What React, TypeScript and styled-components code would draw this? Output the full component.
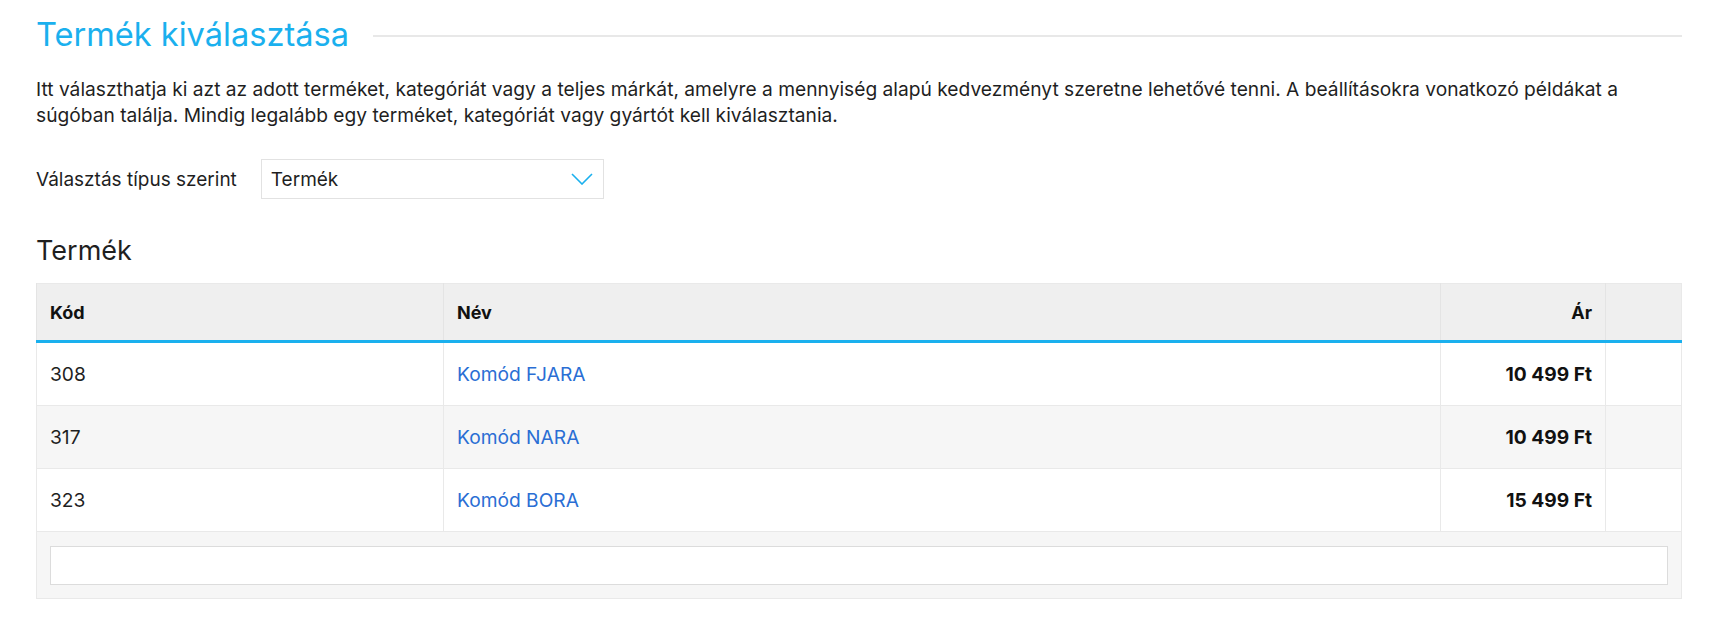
import styled, { createGlobalStyle } from 'styled-components';

const GlobalStyle = createGlobalStyle`
  body {
    margin: 0;
    background: #fff;
    font-family: 'Inter', 'Noto Sans', sans-serif;
    color: #1f1f1f;
  }
`;

const colors = {
  primary: '#1ab0ee',
  link: '#2a6ed4',
  border: '#e9e9e9',
  headBg: '#efefef',
  altBg: '#f6f6f6',
};

const Page = styled.div`
  padding: 14px 35px 32px 36px;
`;

const TitleRow = styled.div`
  display: flex;
  align-items: center;
  gap: 24px;
`;

const Title = styled.h1`
  margin: 0;
  font-size: 32.6px;
  line-height: 40px;
  font-weight: 400;
  color: ${colors.primary};
  white-space: nowrap;
`;

const Rule = styled.div`
  flex: 1;
  height: 2px;
  margin-top: 4px;
  background: #e8e8e8;
`;

const Intro = styled.p`
  margin: 22px 0 0;
  font-size: 19.2px;
  line-height: 26px;
`;

const FilterRow = styled.div`
  display: flex;
  align-items: center;
  gap: 24px;
  margin-top: 31px;
`;

const Label = styled.label`
  font-size: 19px;
`;

const Select = styled.div`
  display: flex;
  align-items: center;
  justify-content: space-between;
  box-sizing: border-box;
  width: 343px;
  height: 40px;
  padding: 0 10px 0 9px;
  border: 1px solid #e2e2e2;
  font-size: 19px;
  background: #fff;
`;

const SubTitle = styled.h2`
  margin: 34px 0 0;
  font-size: 27px;
  line-height: 35px;
  font-weight: 400;
`;

const Table = styled.table`
  margin-top: 15px;
  width: 100%;
  border-collapse: collapse;
  table-layout: fixed;
  border: 1px solid ${colors.border};
  font-size: 19.2px;
`;

const Th = styled.th<{ $right?: boolean }>`
  height: 56px;
  padding: 0 13px;
  background: ${colors.headBg};
  border-left: 1px solid #e4e4e4;
  border-bottom: 3px solid ${colors.primary};
  text-align: ${(p) => (p.$right ? 'right' : 'left')};
  font-size: 18px;
  font-weight: 700;
  color: #111;
`;

const Row = styled.tr<{ $alt: boolean }>`
  background: ${(p) => (p.$alt ? colors.altBg : '#fff')};
`;

const Td = styled.td<{ $right?: boolean }>`
  height: 62px;
  padding: 0 13px;
  border: 1px solid ${colors.border};
  text-align: ${(p) => (p.$right ? 'right' : 'left')};
`;

const Price = styled.span`
  font-weight: 700;
  color: #111;
`;

const ProductLink = styled.a`
  color: ${colors.link};
  text-decoration: none;
`;

const FooterCell = styled.td`
  padding: 14px 13px 13px;
  background: ${colors.altBg};
  border: 1px solid ${colors.border};
`;

const SearchInput = styled.input`
  display: block;
  box-sizing: border-box;
  width: 100%;
  height: 39px;
  border: 1px solid #dcdcdc;
  background: #fff;
  font: inherit;
  outline: none;
`;

const products = [
  { code: '308', name: 'Komód FJARA', price: '10 499 Ft' },
  { code: '317', name: 'Komód NARA', price: '10 499 Ft' },
  { code: '323', name: 'Komód BORA', price: '15 499 Ft' },
];

export default function App() {
  return (
    <Page>
      <GlobalStyle />
      <TitleRow>
        <Title>Termék kiválasztása</Title>
        <Rule />
      </TitleRow>
      <Intro>
        Itt választhatja ki azt az adott terméket, kategóriát vagy a teljes márkát, amelyre a mennyiség alapú
        kedvezményt szeretne lehetővé tenni. A beállításokra vonatkozó példákat a súgóban találja. Mindig legalább
        egy terméket, kategóriát vagy gyártót kell kiválasztania.
      </Intro>
      <FilterRow>
        <Label>Választás típus szerint</Label>
        <Select>
          <span>Termék</span>
          <svg width="22" height="12" viewBox="0 0 22 12">
            <polyline points="1,1 11,11 21,1" fill="none" stroke={colors.primary} strokeWidth="1.6" />
          </svg>
        </Select>
      </FilterRow>
      <SubTitle>Termék</SubTitle>
      <Table>
        <colgroup>
          <col style={{ width: 407 }} />
          <col />
          <col style={{ width: 165 }} />
          <col style={{ width: 76 }} />
        </colgroup>
        <thead>
          <tr>
            <Th>Kód</Th>
            <Th>Név</Th>
            <Th $right>Ár</Th>
            <Th />
          </tr>
        </thead>
        <tbody>
          {products.map((p, i) => (
            <Row key={p.code} $alt={i % 2 === 1}>
              <Td>{p.code}</Td>
              <Td>
                <ProductLink href="#">{p.name}</ProductLink>
              </Td>
              <Td $right>
                <Price>{p.price}</Price>
              </Td>
              <Td />
            </Row>
          ))}
          <tr>
            <FooterCell colSpan={4}>
              <SearchInput type="text" />
            </FooterCell>
          </tr>
        </tbody>
      </Table>
    </Page>
  );
}
